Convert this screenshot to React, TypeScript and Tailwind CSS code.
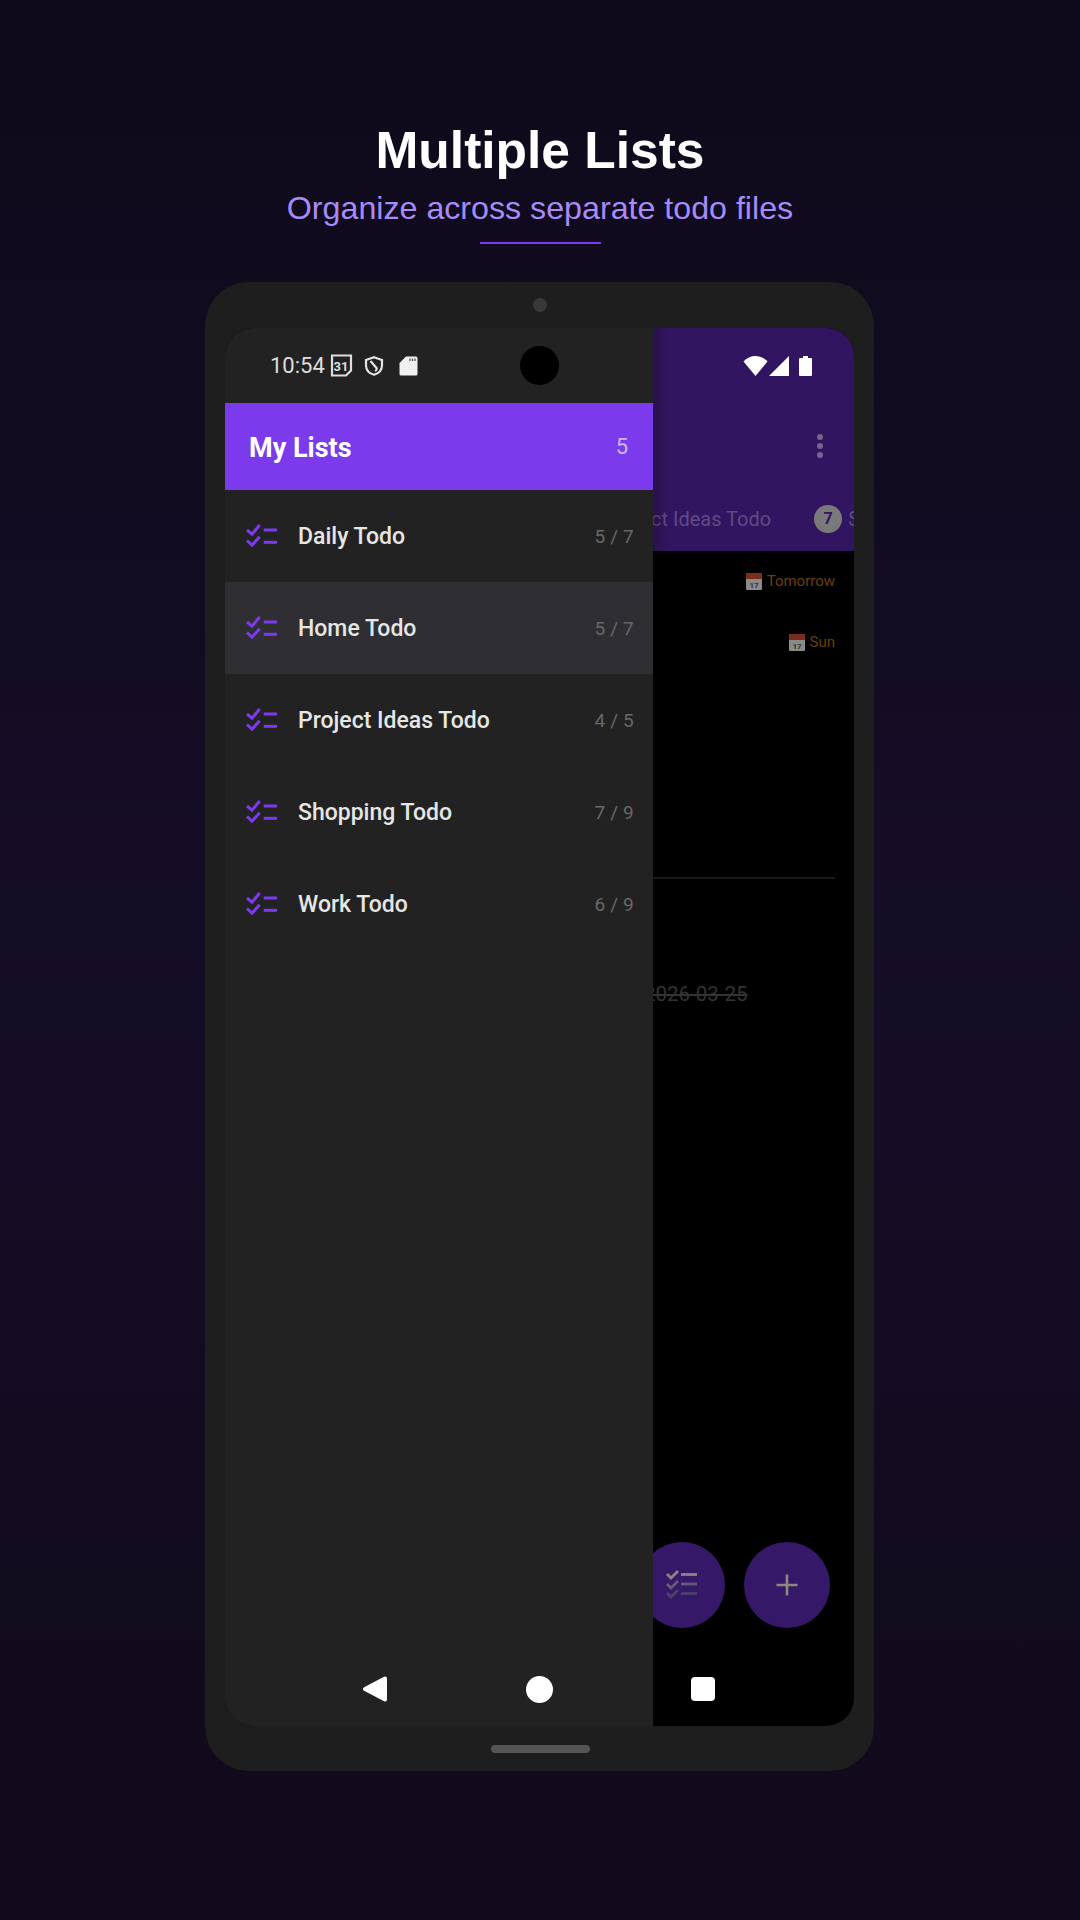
const lists = [
  { name: "Daily Todo", count: "5 / 7" },
  { name: "Home Todo", count: "5 / 7", selected: true },
  { name: "Project Ideas Todo", count: "4 / 5" },
  { name: "Shopping Todo", count: "7 / 9" },
  { name: "Work Todo", count: "6 / 9" },
];

function ListIcon() {
  return (
    <svg width="32" height="24" viewBox="0 0 32 24" fill="none" stroke="#7c3aed" strokeWidth="3">
      <path d="M1 6l5 4.200L13.700 1" />
      <path d="M1 16.500l5 4.700 7.700-8.500" />
      <path d="M17.700 6H31" />
      <path d="M17.700 18.300H31" />
    </svg>
  );
}

function CalendarEmoji() {
  return (
    <svg width="16" height="17" viewBox="0 0 16 17">
      <rect width="16" height="17" rx="1" fill="#8a8a8a" />
      <rect width="16" height="6" rx="1" fill="#7a2c1e" />
      <text x="8" y="14.500" textAnchor="middle" fontSize="8" fontWeight="700" fill="#333" fontFamily="Roboto">17</text>
    </svg>
  );
}

export default function App() {
  return (
    <div className="w-[1080px] h-[1920px] overflow-hidden flex flex-col items-center pt-[120px] bg-gradient-to-b from-[#0e0a1a] via-[#150d27] to-[#100a1a] font-['Liberation_Sans',sans-serif]">
      <h1 className="text-[51.500px] leading-[60px] font-bold text-white">Multiple Lists</h1>
      <p className="mt-[10px] text-[32.200px] leading-[36px] text-[#a78bfa]">Organize across separate todo files</p>
      <div className="mt-[16px] w-[121px] h-[2px] bg-[#7c3aed]" />

      {/* Phone */}
      <div className="mt-[38px] mr-[1px] w-[669px] h-[1489px] rounded-[44px] bg-[#1e1e1e] flex flex-col px-5">
        <div className="h-[46px] shrink-0 flex items-center justify-center">
          <div className="w-[14px] h-[14px] rounded-full bg-[#383838]" />
        </div>

        {/* Screen */}
        <div className="relative flex-1 flex rounded-[28px] overflow-hidden bg-black font-['Roboto',sans-serif]">
          {/* Drawer */}
          <aside className="w-[428px] shrink-0 bg-[#222222] flex flex-col">
            <div className="h-[75px] flex items-center pl-[45px] text-[#dedede]">
              <span className="text-[22px] w-[60px]">10:54</span>
              <svg width="23" height="23" viewBox="0 0 23 23" fill="none">
                <path d="M2 1.500h19v15l-5 5H2z" stroke="#dedede" strokeWidth="2.200" />
                <text x="11" y="16.500" textAnchor="middle" fontSize="13" fontWeight="700" fill="#dedede" fontFamily="Roboto">31</text>
              </svg>
              <svg className="ml-[11px]" width="20" height="20" viewBox="0 0 20 20" fill="none" stroke="#e4e4e4" strokeWidth="2.200">
                <path d="M10 1.200l8 2.800v5.500c0 4.500-3.200 7.800-8 9.300-4.800-1.500-8-4.800-8-9.300V4z" />
                <path d="M6.500 5l6 7c.8 1-.3 2.700-1.500 2.200" />
              </svg>
              <svg className="ml-[15px]" width="19" height="20" viewBox="0 0 19 20">
                <path d="M7 .5h10a1.500 1.500 0 0 1 1.500 1.500v16a1.500 1.500 0 0 1-1.500 1.500H2A1.500 1.500 0 0 1 .5 18V7z" fill="#f0f0f0" />
                <path d="M11 2.500v2.500M13.500 2.500v2.500M16 2.500v2.500" stroke="#555" strokeWidth="1.300" />
              </svg>
            </div>

            <div className="h-[87px] bg-[#7c3aed] flex items-center justify-between pl-6 pr-[25px]">
              <span className="pt-1 text-[27px] font-bold text-white">My Lists</span>
              <span className="text-[22px] text-[#cdb8f8]">5</span>
            </div>

            {lists.map((list) => (
              <div
                key={list.name}
                className={`h-[92px] flex items-center pl-[21px] pr-[19px] ${list.selected ? "bg-[#2e2e33]" : ""}`}
              >
                <ListIcon />
                <span className="ml-[20px] pt-[2px] flex-1 text-[23px] font-medium text-[#e6e6e6]">{list.name}</span>
                <span className="pt-[2px] text-[19px] tracking-[0.2px] text-[#686868]">{list.count}</span>
              </div>
            ))}
          </aside>

          {/* Dimmed page behind the drawer */}
          <section className="relative flex-1 min-w-0 overflow-hidden flex flex-col">
            <div className="absolute top-0 left-0 w-[16px] h-[223px] bg-gradient-to-r from-black/20 to-transparent" />
            <div className="bg-[#321560] h-[223px] shrink-0 flex flex-col">
              <div className="h-[75px] flex items-center justify-end gap-[1px] pr-[42px]">
                <svg width="25" height="20" viewBox="0 0 25 20">
                  <path d="M12.500 20L.5 5.500C3.500 2 8 0 12.500 0s9 2 12 5.500z" fill="#ffffff" />
                </svg>
                <svg width="20" height="20" viewBox="0 0 20 20">
                  <path d="M20 0v20H0z" fill="#ffffff" />
                </svg>
                <svg className="ml-[9px]" width="13" height="20" viewBox="0 0 13 20">
                  <path d="M4 0h5v2h3a1 1 0 0 1 1 1v16a1 1 0 0 1-1 1H1a1 1 0 0 1-1-1V3a1 1 0 0 1 1-1h3z" fill="#ffffff" />
                </svg>
              </div>
              <div className="h-[86px] flex flex-col items-end justify-center gap-[3px] pr-[31px]">
                <div className="w-[6px] h-[6px] rounded-full bg-[#756592]" />
                <div className="w-[6px] h-[6px] rounded-full bg-[#756592]" />
                <div className="w-[6px] h-[6px] rounded-full bg-[#756592]" />
              </div>
              <div className="flex-1 pb-[3px] flex items-center whitespace-nowrap text-[20px] text-[#5f4b80] ml-[-48px]">
                <span>Project Ideas Todo</span>
                <span className="ml-[43px] w-[28px] h-[28px] shrink-0 rounded-full bg-[#7a7a7a] flex items-center justify-center text-[16px] font-bold text-[#321560]">7</span>
                <span className="ml-[6px]">Shopping Todo</span>
              </div>
            </div>

            <div className="flex items-center justify-end gap-[5px] pr-[19px] mt-[21px] h-[18px] text-[15px] text-[#6b3f06]">
              <CalendarEmoji />
              <span>Tomorrow</span>
            </div>
            <div className="flex items-center justify-end gap-[5px] pr-[19px] mt-[43px] h-[18px] text-[15px] text-[#6b3f06]">
              <CalendarEmoji />
              <span>Sun</span>
            </div>

            <div className="mt-[226px] mr-[19px] h-[2px] bg-[#161a18] shrink-0" />

            <div className="mt-[101px] ml-[-9px] whitespace-nowrap text-[20.500px] leading-[28px] text-[#333333] line-through">2026-03-25</div>

            <div className="mt-auto mb-[98px] flex justify-end gap-[19px] pr-[24px]">
              <div className="w-[86px] h-[86px] shrink-0 rounded-full bg-[#351868] flex items-center justify-center">
                <svg width="32" height="30" viewBox="0 0 32 30" fill="none" strokeWidth="2.800">
                  <g stroke="#8a8580">
                    <path d="M1 4l4 4 7-7" />
                    <path d="M15 4.500h16" />
                  </g>
                  <g stroke="#635c74">
                    <path d="M1 14l4 4 7-7" />
                    <path d="M15 14h16" />
                  </g>
                  <g stroke="#4c4168">
                    <path d="M1 23l4 4 7-7" />
                    <path d="M15 23.500h16" />
                  </g>
                </svg>
              </div>
              <div className="w-[86px] h-[86px] shrink-0 rounded-full bg-[#351868] flex items-center justify-center">
                <svg width="24" height="24" viewBox="0 0 24 24" stroke="#8f8a80" strokeWidth="2.600">
                  <path d="M12 1.500v21M1.500 12h21" />
                </svg>
              </div>
            </div>
          </section>

          {/* Camera cutout */}
          <div className="absolute top-[18px] left-[295px] w-[39px] h-[39px] rounded-full bg-black" />

          {/* System nav */}
          <div className="absolute bottom-[23px] inset-x-0 flex justify-center">
            <div className="w-[163px] flex justify-center">
              <svg className="mr-[2px]" width="27" height="28" viewBox="0 0 27 28">
                <path d="M23 3.500L3 14l20 10.500z" fill="#ffffff" stroke="#ffffff" strokeWidth="4" strokeLinejoin="round" />
              </svg>
            </div>
            <div className="w-[163px] flex justify-center items-center">
              <div className="w-[27px] h-[27px] rounded-full bg-white" />
            </div>
            <div className="w-[163px] flex justify-center items-center">
              <div className="w-[24px] h-[24px] rounded-[4px] bg-white" />
            </div>
          </div>
        </div>

        <div className="h-[45px] shrink-0 flex items-center justify-center">
          <div className="ml-[1px] w-[99px] h-[8px] rounded-full bg-[#555555]" />
        </div>
      </div>
    </div>
  );
}
